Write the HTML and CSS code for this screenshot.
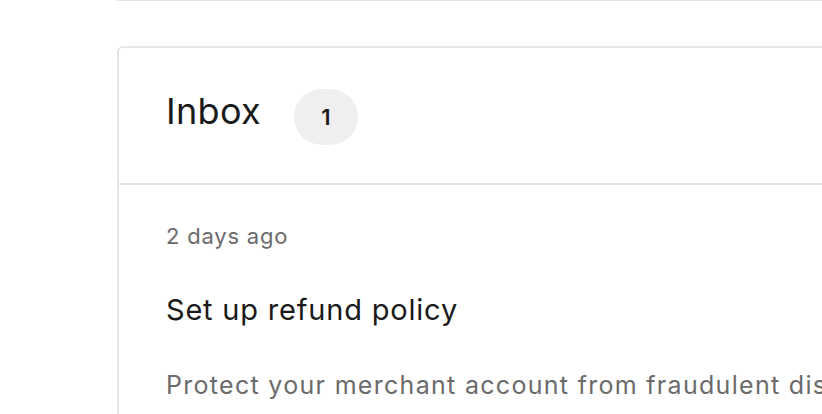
FILE: index.html
```html
<html>
    <head>
        <meta name="viewport" content="width=device-width, initial-scale=1.0">
        <link rel="stylesheet" href="styles.css">
    </head>
    <body>
        <div class="page">
            <div class="prev-section"></div>
            <div class="card">
                <div class="card-header">
                    <h2 class="title">Inbox</h2>
                    <span class="badge">1</span>
                </div>
                <div class="message">
                    <div class="time">2 days ago</div>
                    <div class="subject">Set up refund policy</div>
                    <div class="preview">Protect your merchant account from fraudulent disputes by publishing a clear refund policy.</div>
                </div>
            </div>
        </div>
    </body>
</html>
```

FILE: styles.css
```css
body{
    margin: 0;
    overflow: hidden;
    background: #fff;
    font-family: Inter, "Noto Sans", sans-serif;
    color: #1a1a1a;
}
.page{
    padding-left: 117px;
    width: 1000px;
}
.prev-section{
    border-bottom: 1px solid #e3e3e3;
}
.card{
    margin-top: 45px;
    border: 2px solid #e6e6e6;
    border-radius: 6px 6px 0 0;
}
.card-header{
    display: flex;
    align-items: flex-start;
    gap: 33px;
    padding: 41px 47px 38px;
    border-bottom: 2px solid #e3e3e3;
}
.title{
    margin: 0;
    font-size: 36px;
    font-weight: 400;
    line-height: 44px;
    letter-spacing: 0.3px;
}
.badge{
    display: flex;
    align-items: center;
    justify-content: center;
    width: 64px;
    height: 56px;
    border-radius: 28px;
    background: #efefef;
    font-size: 22px;
    font-weight: 600;
}
.message{
    padding: 36px 47px;
}
.time{
    font-size: 22px;
    color: #6b6b6b;
    line-height: 30px;
    letter-spacing: 0.8px;
}
.subject{
    margin-top: 41px;
    font-size: 29px;
    line-height: 36px;
    letter-spacing: 0.8px;
}
.preview{
    margin-top: 40px;
    font-size: 25px;
    line-height: 34px;
    color: #6b6b6b;
    letter-spacing: 1.3px;
    white-space: nowrap;
}
```
